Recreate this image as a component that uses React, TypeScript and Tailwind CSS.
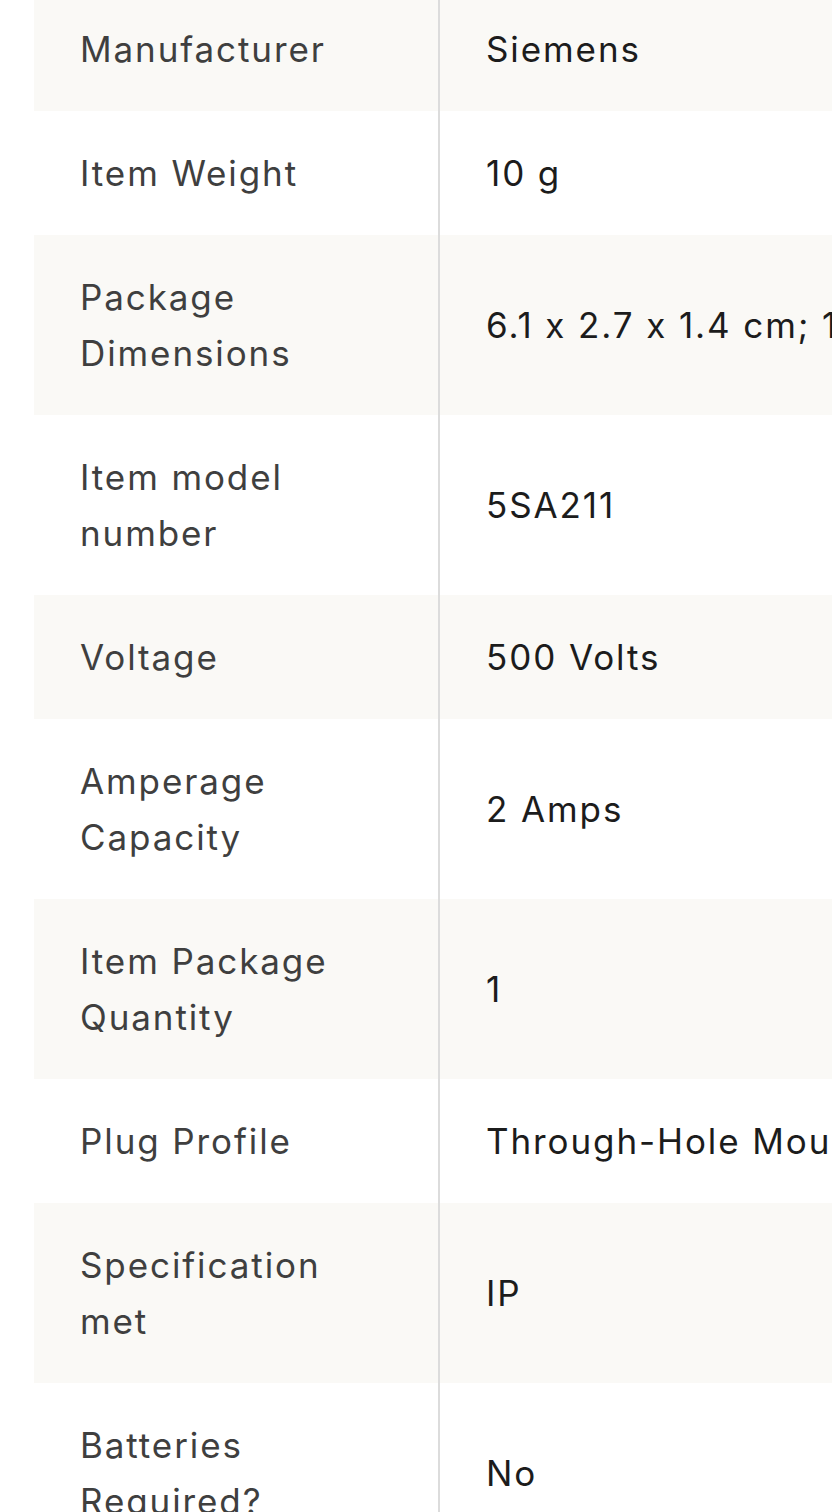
const specs: { label: string; value: string }[] = [
  { label: 'Manufacturer', value: 'Siemens' },
  { label: 'Item Weight', value: '10 g' },
  { label: 'Package Dimensions', value: '6.1 x 2.7 x 1.4 cm; 10 g' },
  { label: 'Item model number', value: '5SA211' },
  { label: 'Voltage', value: '500 Volts' },
  { label: 'Amperage Capacity', value: '2 Amps' },
  { label: 'Item Package Quantity', value: '1' },
  { label: 'Plug Profile', value: 'Through-Hole Mount' },
  { label: 'Specification met', value: 'IP' },
  { label: 'Batteries Required?', value: 'No' },
];

export default function App() {
  return (
    <div className="h-[1512px] w-[832px] overflow-hidden bg-white font-['Inter',sans-serif] [font-feature-settings:'calt'_0]">
      <table className="-mt-[13px] ml-[34px] w-[900px] table-fixed border-collapse text-[35px] leading-[56px] tracking-[1.9px]">
        <tbody>
          {specs.map((row, i) => (
            <tr key={row.label} className={i % 2 === 0 ? 'bg-[#faf9f6]' : 'bg-white'}>
              <th className="w-[405px] border-r-2 border-[#dcdcdc] py-[34px] pl-[46px] pr-[60px] text-left align-middle font-normal text-[#3f3f3f]">
                {row.label}
              </th>
              <td className="whitespace-nowrap py-[34px] pl-[46px] align-middle text-[#1c1c1c]">
                {row.value}
              </td>
            </tr>
          ))}
        </tbody>
      </table>
    </div>
  );
}
